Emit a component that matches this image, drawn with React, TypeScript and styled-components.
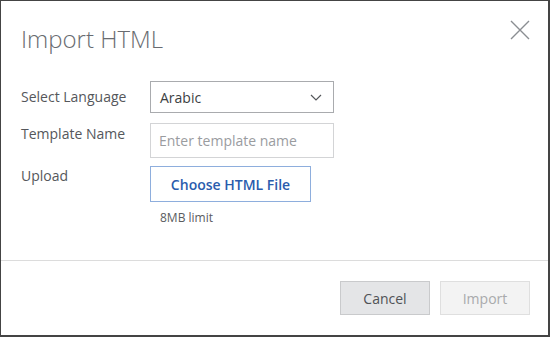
import React, { useState } from 'react'
import styled, { createGlobalStyle } from 'styled-components'

// global
const GlobalStyle = createGlobalStyle`
  html, body {
    margin: 0;
    padding: 0;
    background: #ffffff;
  }
  * {
    box-sizing: border-box;
  }
`

// styled components
const Dialog = styled.div`
  width: 550px;
  height: 337px;
  display: flex;
  flex-direction: column;
  background: #ffffff;
  border-style: solid;
  border-color: #444444;
  border-width: 1px 2px 2px 1px;
  font-family: 'Open Sans', 'Liberation Sans', sans-serif;
`

const Body = styled.div`
  flex: 1;
  padding: 22px 18px 0 20px;
`

const Header = styled.div`
  display: flex;
  align-items: flex-start;
  justify-content: space-between;
`

const Title = styled.h2`
  margin: 0;
  font-size: 24px;
  font-weight: 300;
  line-height: 32px;
  color: #686b70;
`

const CloseButton = styled.button`
  margin-top: -3px;
  padding: 0;
  width: 20px;
  height: 20px;
  border: none;
  background: none;
  cursor: pointer;
  display: flex;
`

const Form = styled.div`
  margin-top: 26px;
  display: grid;
  grid-template-columns: 129px 184px;
  row-gap: 10px;
  align-items: start;
`

interface LabelProps {
  $offset: number
}
const Label = styled.label<LabelProps>`
  margin-top: ${({ $offset }) => $offset}px;
  font-size: 14px;
  line-height: 20px;
  color: #55575b;
`

const SelectBox = styled.div`
  height: 32px;
  padding: 0 11px 0 9px;
  display: flex;
  align-items: center;
  justify-content: space-between;
  border: 1px solid #a9abae;
  font-size: 14px;
  color: #3c3e42;
  cursor: pointer;
`

const TextInput = styled.input`
  height: 35px;
  width: 100%;
  padding: 0 8px;
  border: 1px solid #d3d4d6;
  outline: none;
  font-family: inherit;
  font-size: 14px;
  color: #333;
  &::placeholder {
    color: #9a9c9f;
  }
`

const UploadColumn = styled.div`
  display: flex;
  flex-direction: column;
  align-items: flex-start;
  margin-top: -2px;
`

const ChooseButton = styled.button`
  width: 161px;
  height: 36px;
  padding: 0;
  border: 1px solid #8eaedd;
  background: #ffffff;
  font-family: inherit;
  font-size: 14px;
  font-weight: 600;
  color: #2a5cad;
  cursor: pointer;
`

const Hint = styled.div`
  margin-top: 7px;
  padding-left: 10px;
  font-size: 12px;
  line-height: 18px;
  color: #5a5c60;
`

const Footer = styled.div`
  border-top: 1px solid #dcdcdc;
  padding: 20px 18px 20px 0;
  display: flex;
  justify-content: flex-end;
  gap: 10px;
`

interface ActionProps {
  $disabled?: boolean
}
const ActionButton = styled.button<ActionProps>`
  width: 90px;
  height: 34px;
  padding: 0;
  font-family: inherit;
  font-size: 14px;
  border: 1px solid ${({ $disabled }) => ($disabled ? '#dfdfdf' : '#c9cacc')};
  background: ${({ $disabled }) => ($disabled ? '#f3f3f3' : '#e4e5e7')};
  color: ${({ $disabled }) => ($disabled ? '#a9aaac' : '#505256')};
  cursor: ${({ $disabled }) => ($disabled ? 'default' : 'pointer')};
`

const App = () => {
  const [templateName, setTemplateName] = useState('')

  return (
    <>
      <GlobalStyle />
      <Dialog>
        <Body>
          <Header>
            <Title>Import HTML</Title>
            <CloseButton aria-label="Close">
              <svg width="20" height="20" viewBox="0 0 20 20">
                <path
                  d="M1 1 L19 19 M19 1 L1 19"
                  stroke="#8b8e92"
                  strokeWidth="1.4"
                  fill="none"
                />
              </svg>
            </CloseButton>
          </Header>
          <Form>
            <Label $offset={6}>Select Language</Label>
            <SelectBox>
              <span>Arabic</span>
              <svg width="12" height="7" viewBox="0 0 12 7">
                <path d="M1 1 L6 6 L11 1" stroke="#55575b" strokeWidth="1.2" fill="none" />
              </svg>
            </SelectBox>
            <Label $offset={1}>Template Name</Label>
            <TextInput
              placeholder="Enter template name"
              value={templateName}
              onChange={e => setTemplateName(e.target.value)}
            />
            <Label $offset={-2}>Upload</Label>
            <UploadColumn>
              <ChooseButton>Choose HTML File</ChooseButton>
              <Hint>8MB limit</Hint>
            </UploadColumn>
          </Form>
        </Body>
        <Footer>
          <ActionButton>Cancel</ActionButton>
          <ActionButton $disabled>Import</ActionButton>
        </Footer>
      </Dialog>
    </>
  )
}

export default App
